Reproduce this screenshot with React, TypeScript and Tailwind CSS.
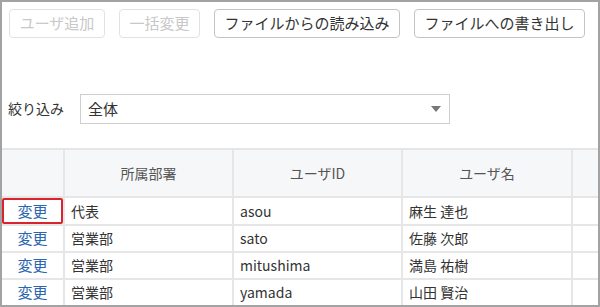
const users = [
  { dept: "代表", id: "asou", name: "麻生 達也" },
  { dept: "営業部", id: "sato", name: "佐藤 次郎" },
  { dept: "営業部", id: "mitushima", name: "満島 祐樹" },
  { dept: "営業部", id: "yamada", name: "山田 賢治" },
];

const font = { fontFamily: '"Noto Sans CJK JP", "Noto Sans", sans-serif' };

function ToolButton({ label, disabled, width }: { label: string; disabled?: boolean; width: string }) {
  return (
    <button
      className={
        disabled
          ? `${width} h-[29px] rounded-[4px] border border-[#e2e2e2] text-[#c8c8c8] text-[15px] bg-white`
          : `${width} h-[29px] rounded-[4px] border border-[#c4c4c4] text-[#333] text-[15px] bg-white`
      }
    >
      {label}
    </button>
  );
}

export default function App() {
  return (
    <div
      style={font}
      className="w-[600px] h-[307px] border-2 border-[#a3a3a3] bg-white overflow-hidden flex flex-col"
    >
      {/* toolbar */}
      <div className="flex gap-[14px] pl-[7px] pt-[7px]">
        <ToolButton label="ユーザ追加" disabled width="w-[96px]" />
        <ToolButton label="一括変更" disabled width="w-[81px]" />
        <ToolButton label="ファイルからの読み込み" width="w-[186px]" />
        <ToolButton label="ファイルへの書き出し" width="w-[171px]" />
      </div>

      {/* filter */}
      <div className="flex items-center mt-[56px] pl-[6px]">
        <span className="text-[14px] text-[#333] w-[72px] -mt-[2px]">絞り込み</span>
        <div className="w-[370px] h-[30px] border border-[#cfcfcf] flex items-center justify-between pl-[7px] pr-[8px]">
          <span className="text-[15px] text-[#333]">全体</span>
          <svg width="10" height="6" viewBox="0 0 10 6">
            <path d="M0 0 L10 0 L5 6 Z" fill="#777" />
          </svg>
        </div>
      </div>

      {/* table */}
      <table className="table-fixed border-collapse mt-[24px] w-[596px] text-[14px] text-[#333]">
        <colgroup>
          <col className="w-[62px]" />
          <col className="w-[169px]" />
          <col className="w-[169px]" />
          <col className="w-[170px]" />
          <col />
        </colgroup>
        <thead>
          <tr className="h-[48px] bg-[#f6f7f9] text-[#555]">
            <th className="border-2 border-l-0 border-[#e6e6e6] font-normal"></th>
            <th className="border-2 border-[#e6e6e6] font-normal">所属部署</th>
            <th className="border-2 border-[#e6e6e6] font-normal">ユーザID</th>
            <th className="border-2 border-[#e6e6e6] font-normal">ユーザ名</th>
            <th className="border-2 border-r-0 border-[#e6e6e6] font-normal"></th>
          </tr>
        </thead>
        <tbody>
          {users.map((u, i) => (
            <tr key={u.id} className="h-[27px]">
              <td className="border-2 border-l-0 border-[#e6e6e6] p-0 text-center">
                {i === 0 ? (
                  <div className="h-[26px] border-2 border-[#d9232d] rounded-[2px] flex items-center justify-center text-[#2c66b0] text-[15px]">
                    変更
                  </div>
                ) : (
                  <span className="text-[#2c66b0] text-[15px]">変更</span>
                )}
              </td>
              <td className="border-2 border-[#e6e6e6] pl-[6px] py-0">{u.dept}</td>
              <td className="border-2 border-[#e6e6e6] pl-[6px] py-0">{u.id}</td>
              <td className="border-2 border-[#e6e6e6] pl-[6px] py-0">{u.name}</td>
              <td className="border-2 border-r-0 border-[#e6e6e6]"></td>
            </tr>
          ))}
        </tbody>
      </table>
    </div>
  );
}
